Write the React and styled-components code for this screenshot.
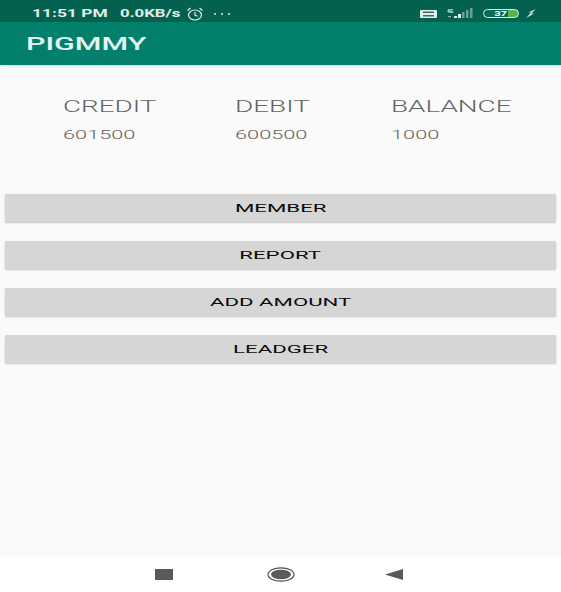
import React from "react";
import styled, { createGlobalStyle } from "styled-components";

const Global = createGlobalStyle`
  html, body { margin: 0; padding: 0; background: #fafafa; }
  * { box-sizing: border-box; }
`;

const Screen = styled.div`
  width: 561px;
  height: 592px;
  display: flex;
  flex-direction: column;
  background: #fafafa;
  font-family: Roboto, "Liberation Sans", sans-serif;
  overflow: hidden;
`;

const Wide = styled.span`
  display: inline-block;
  white-space: nowrap;
  transform: scaleX(${(p) => p.$x || 1.5});
  transform-origin: ${(p) => p.$origin || "left center"};
`;

const StatusBar = styled.div`
  height: 22px;
  flex: none;
  background: #04614f;
  color: #e0eeea;
  display: flex;
  align-items: center;
  justify-content: space-between;
  padding: 5px 25px 0 32px;
  font-size: 10.5px;
  font-weight: 700;
`;

const StatusGroup = styled.div`
  display: flex;
  align-items: center;
  gap: ${(p) => p.$gap || 0}px;
`;

const Clock = styled.span`
  width: 88px;
`;

const Speed = styled.span`
  width: 66px;
`;

const AppBar = styled.div`
  height: 43px;
  flex: none;
  background: #03806c;
  color: #e4f5f1;
  display: flex;
  align-items: center;
  padding: 0 0 0 26px;
  font-size: 17.5px;
  font-weight: 500;
  box-shadow: 0 1px 2px rgba(0, 0, 0, 0.15);
`;

const Stats = styled.div`
  display: grid;
  grid-template-columns: 172px 156px 1fr;
  grid-template-rows: 26px 20px;
  row-gap: 5px;
  padding: 29px 0 0 62.5px;
  color: #636363;
`;

const StatLabel = styled.div`
  font-size: 16px;
  font-weight: 300;
  line-height: 26px;
`;

const StatValue = styled.div`
  font-size: 12.5px;
  font-weight: 300;
  line-height: 20px;
`;

const Buttons = styled.div`
  display: flex;
  flex-direction: column;
  gap: 19px;
  padding: 49px 5px 0;
  flex: 1;
`;

const ActionButton = styled.button`
  height: 28px;
  border: none;
  border-radius: 1px;
  background: #d5d6d5;
  color: #0a0a0a;
  font-family: inherit;
  font-size: 11.5px;
  font-weight: 400;
  padding: 0;
  display: flex;
  align-items: center;
  justify-content: center;
  box-shadow: 0 1px 2px rgba(0, 0, 0, 0.22);
`;

const NavBar = styled.div`
  height: 36px;
  flex: none;
  background: #ffffff;
  display: flex;
  align-items: center;
  padding: 0 0 0 155px;
`;

const NavSquare = styled.div`
  width: 18px;
  height: 11px;
  background: #5a5a5a;
  margin-right: 94px;
`;

const NavCircleIcon = styled.svg`
  width: 28px;
  height: 15px;
  margin-right: 90px;
`;

const NavBackIcon = styled.svg`
  width: 19px;
  height: 11px;
`;

const SmallIcon = styled.svg`
  display: block;
`;

const VolteIcon = styled.svg`
  display: block;
  margin-right: 2px;
`;

const DotsIcon = styled.svg`
  display: block;
  margin-left: 8px;
`;

const Battery = styled.div`
  width: 36px;
  height: 9px;
  margin-right: -1px;
  border: 1px solid #dff0e8;
  border-radius: 5px;
  background: linear-gradient(90deg, #0a6a55 0 72%, #5cb24d 72% 100%);
  color: #f2fff6;
  font-size: 8px;
  line-height: 7px;
  text-align: center;
`;

const items = [
  ["CREDIT", "601500"],
  ["DEBIT", "600500"],
  ["BALANCE", "1000"],
];

const actions = ["MEMBER", "REPORT", "ADD AMOUNT", "LEADGER"];

export default function App() {
  return (
    <Screen>
      <Global />
      <StatusBar>
        <StatusGroup>
          <Clock><Wide $x={1.66}>11:51 PM</Wide></Clock>
          <Speed><Wide $x={1.6}>0.0KB/s</Wide></Speed>
          <SmallIcon width="18" height="14" viewBox="0 0 18 14" fill="none" stroke="#e0eeea" strokeWidth="1.2">
            <ellipse cx="9" cy="8" rx="6.5" ry="5" />
            <path d="M9 5v3.2l2.5 1M1.5 3.5 4.5 1M16.5 3.5 13.5 1" />
          </SmallIcon>
          <DotsIcon width="22" height="4" viewBox="0 0 22 4" fill="#e0eeea">
            <circle cx="3" cy="2" r="1" />
            <circle cx="10" cy="2" r="1" />
            <circle cx="17" cy="2" r="1" />
          </DotsIcon>
        </StatusGroup>
        <StatusGroup $gap={8}>
          <VolteIcon width="17" height="8" viewBox="0 0 17 8">
            <rect width="17" height="8" rx="1" fill="#e0eeea" />
            <rect x="3" y="1.5" width="11" height="1.5" fill="#3a6a60" />
            <rect x="3" y="5" width="11" height="1.5" fill="#3a6a60" />
          </VolteIcon>
          <SmallIcon width="28" height="11" viewBox="0 0 28 11" fill="#e0eeea">
            <text x="0" y="4.5" fontSize="5" fontWeight="700" fontFamily="Roboto, sans-serif">4G</text>
            <rect x="1" y="8" width="3" height="1.2" opacity="0.6" />
            <rect x="7" y="8" width="3" height="2" />
            <rect x="11" y="6" width="3" height="4" />
            <rect x="15" y="4" width="2.5" height="6" opacity="0.45" />
            <rect x="19" y="2" width="2.5" height="8" opacity="0.45" />
            <rect x="23" y="0" width="2.5" height="10" opacity="0.45" />
          </SmallIcon>
          <Battery><Wide $x={1.4} $origin="center">37</Wide></Battery>
          <SmallIcon width="10" height="9" viewBox="0 0 10 9" fill="#e0eeea">
            <path d="M9.8 0 2.5 3.6h2.6L0.2 9 8 4.6H5.2z" />
          </SmallIcon>
        </StatusGroup>
      </StatusBar>
      <AppBar><Wide $x={1.74}>PIGMMY</Wide></AppBar>
      <Stats>
        {items.map(([label]) => (
          <StatLabel key={label}><Wide $x={1.74}>{label}</Wide></StatLabel>
        ))}
        {items.map(([label, value]) => (
          <StatValue key={label}><Wide $x={1.74}>{value}</Wide></StatValue>
        ))}
      </Stats>
      <Buttons>
        {actions.map((a) => (
          <ActionButton key={a}><Wide $x={1.93} $origin="center">{a}</Wide></ActionButton>
        ))}
      </Buttons>
      <NavBar>
        <NavSquare />
        <NavCircleIcon viewBox="0 0 28 15">
          <ellipse cx="14" cy="7.5" rx="13" ry="6.7" fill="none" stroke="#4c4c4c" strokeWidth="1.2" />
          <ellipse cx="14" cy="7.5" rx="10" ry="4.8" fill="#5a5a5a" />
        </NavCircleIcon>
        <NavBackIcon viewBox="0 0 19 11">
          <path d="M0 5.5 18 0v11z" fill="#5a5a5a" />
        </NavBackIcon>
      </NavBar>
    </Screen>
  );
}
